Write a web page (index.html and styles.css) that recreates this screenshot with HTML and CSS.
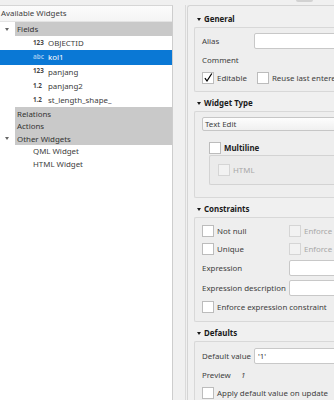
FILE: index.html
```html
<!DOCTYPE html>
<html lang="en">
<head>
  <meta charset="UTF-8" />
  <meta name="viewport" content="width=device-width, initial-scale=1.0"/>
  <title>Attributes Form</title>
  <link rel="stylesheet" href="styles.css">
</head>
<body>

<div class="topbar"><div class="tab-stub"></div></div>

<div class="main">

  <!-- Available widgets tree -->
  <div class="widgets">
    <div class="panel-head">Available Widgets</div>
    <div class="tree">
      <div class="row group"><span class="arrow"><i></i></span><span class="label">Fields</span></div>
      <div class="row leaf"><span class="type">123</span>OBJECTID</div>
      <div class="row leaf selected"><span class="type">abc</span>kol1</div>
      <div class="row leaf"><span class="type">123</span>panjang</div>
      <div class="row leaf"><span class="type">1.2</span>panjang2</div>
      <div class="row leaf"><span class="type">1.2</span>st_length_shape_</div>
      <div class="row group"><span class="arrow"></span><span class="label">Relations</span></div>
      <div class="row group"><span class="arrow"></span><span class="label">Actions</span></div>
      <div class="row group"><span class="arrow"><i></i></span><span class="label">Other Widgets</span></div>
      <div class="row plain">QML Widget</div>
      <div class="row plain">HTML Widget</div>
    </div>
  </div>

  <div class="splitter"></div>

  <!-- Widget properties -->
  <div class="props">
    <div class="frame">

      <section class="box">
        <div class="box-head"><span class="caret"></span>General</div>
        <div class="box-body form general">
          <span class="lbl">Alias</span>
          <input class="field" type="text">
          <span class="lbl wide">Comment</span>
          <div class="checks wide">
            <span class="check-item"><span class="check on"><svg viewBox="0 0 12 12"><path d="M2.3 6.2 L4.8 9.6 L10.6 0.6"/></svg></span>Editable</span>
            <span class="check-item"><span class="check"></span>Reuse last entered value</span>
          </div>
        </div>
      </section>

      <section class="box">
        <div class="box-head"><span class="caret"></span>Widget Type</div>
        <div class="box-body widget-type">
          <div class="combo">Text Edit</div>
          <div class="subgroup">
            <div class="subgroup-title"><span class="check"></span>Multiline</div>
            <div class="subgroup-body">
              <span class="check-item disabled"><span class="check"></span>HTML</span>
            </div>
          </div>
        </div>
      </section>

      <section class="box">
        <div class="box-head"><span class="caret"></span>Constraints</div>
        <div class="box-body form constraints">
          <span class="check-item"><span class="check"></span>Not null</span>
          <span class="check-item disabled"><span class="check"></span>Enforce not null constraint</span>
          <span class="check-item"><span class="check"></span>Unique</span>
          <span class="check-item disabled"><span class="check"></span>Enforce unique constraint</span>
          <span class="lbl">Expression</span>
          <input class="field" type="text">
          <span class="lbl">Expression description</span>
          <input class="field" type="text">
          <span class="check-item wide"><span class="check"></span>Enforce expression constraint</span>
        </div>
      </section>

      <section class="box">
        <div class="box-head"><span class="caret"></span>Defaults</div>
        <div class="box-body form defaults">
          <span class="lbl">Default value</span>
          <input class="field" type="text" value="'1'">
          <div class="preview wide"><span class="preview-lbl">Preview</span><em>1</em></div>
          <span class="check-item wide"><span class="check"></span>Apply default value on update</span>
        </div>
      </section>

    </div>
  </div>
</div>

</body>
</html>
```

FILE: styles.css
```css
* { box-sizing: border-box; }

body, html {
  margin: 0;
  padding: 0;
  width: 334px;
  height: 400px;
  overflow: hidden;
  font-family: "Noto Sans", "Segoe UI", sans-serif;
  font-size: 7.9px;
  color: #404040;
  background-color: #f0f0f0;
}

.topbar {
  height: 5px;
}

.tab-stub {
  margin-left: 296px;
  width: 17px;
  height: 2px;
  background: #d2d2d2;
  border-radius: 0 0 2px 2px;
}

.main {
  display: flex;
  height: 395px;
}

/* left tree */
.widgets {
  width: 173px;
  flex-shrink: 0;
  background: #fff;
  border-top: 1px solid #d6d6d6;
  border-right: 1px solid #cdcdcd;
}

.panel-head {
  height: 16px;
  line-height: 15px;
  padding-left: 1px;
  background: linear-gradient(#fcfcfc, #f4f4f4);
  border-bottom: 1px solid #e3e3e3;
  white-space: nowrap;
}

.row {
  display: flex;
  align-items: center;
  white-space: nowrap;
  height: 12.5px;
}

.tree .row:first-child { height: 14px; }

.row.leaf {
  height: 14.3px;
  padding-left: 33px;
}

.row.plain { padding-left: 33px; }

.row.selected {
  background: #0a78d5;
  color: #fff;
}

.arrow {
  width: 15px;
  height: 100%;
  display: flex;
  align-items: center;
  justify-content: center;
  padding-right: 1px;
}

.arrow i {
  width: 0;
  height: 0;
  border-left: 2.5px solid transparent;
  border-right: 2.5px solid transparent;
  border-top: 3px solid #666;
}

.group .label {
  flex: 1;
  align-self: stretch;
  display: flex;
  align-items: center;
  padding-left: 2px;
  background: #c9c9c9;
  color: #333;
}

.type {
  width: 15px;
  font-size: 6.3px;
  font-weight: bold;
  color: #444;
  position: relative;
  top: -1px;
}

.selected .type { color: #8fc1ee; }

.splitter {
  width: 12px;
  flex-shrink: 0;
}

/* right side */
.props {
  flex: 1;
  overflow: hidden;
  border-left: 1px solid #dadada;
  padding-left: 1px;
  white-space: nowrap;
}

.frame {
  width: 230px;
  height: 100%;
  padding-top: 2px;
  border-top: 1px solid #d4d4d4;
  border-left: 1px solid #d4d4d4;
  border-top-left-radius: 3px;
}

.box-head {
  height: 19px;
  padding-top: 3px;
  padding-left: 9px;
  display: flex;
  align-items: center;
  font-weight: bold;
  color: #1a1a1a;
}

.caret {
  width: 0;
  height: 0;
  margin-right: 3px;
  border-left: 2.5px solid transparent;
  border-right: 2.5px solid transparent;
  border-top: 3px solid #1a1a1a;
}

.box-body {
  margin-left: 6px;
  padding: 5px 0 6px 7px;
  background: #eeeeee;
  border: 1px solid #d8d8d8;
  border-right: none;
  border-radius: 2px 0 0 2px;
}

.form {
  display: grid;
  grid-template-columns: 52px 1fr;
  row-gap: 4px;
  align-items: center;
}

.wide { grid-column: 1 / -1; }

.field {
  height: 16px;
  width: 100%;
  margin: 0;
  padding: 0 3px;
  font: inherit;
  color: #404040;
  background: #fff;
  border: 1px solid #c8c8c8;
  border-radius: 2px;
  outline: none;
}

.general { grid-template-rows: 16px 14px 14px; }

.checks {
  display: flex;
  align-items: center;
}

.check-item {
  display: flex;
  align-items: center;
  height: 14px;
  margin-right: 10px;
}

.check {
  width: 12px;
  height: 12px;
  flex-shrink: 0;
  margin-right: 3px;
  background: #fff;
  border: 1px solid #bcbcbc;
}

.check svg {
  display: block;
  width: 10px;
  height: 10px;
  overflow: visible;
}

.check svg path {
  fill: none;
  stroke: #000;
  stroke-width: 1.5;
}

.disabled { color: #a8a8a8; }

.disabled .check {
  background: #f2f2f2;
  border-color: #d5d5d5;
}

/* widget type */
.widget-type { padding-bottom: 12px; }

.combo {
  height: 14px;
  line-height: 12px;
  padding-left: 2px;
  background: linear-gradient(#fdfdfd, #f0f0f0);
  border: 1px solid #c6c6c6;
  border-radius: 2px;
}

.subgroup {
  margin-top: 10px;
  margin-left: 7px;
}

.subgroup-title {
  height: 14px;
  display: flex;
  align-items: center;
  font-weight: bold;
  color: #222;
}

.subgroup-body {
  height: 30px;
  padding: 8px 0 0 8px;
  background: #ebebeb;
  border: 1px solid #d3d3d3;
  border-right: none;
  border-radius: 2px 0 0 2px;
}

.subgroup-body .check-item { height: 12px; }

/* constraints */
.constraints {
  grid-template-columns: 87px 1fr;
  grid-template-rows: 14px 14px 16px 16px 14px;
  padding-top: 6px;
  padding-bottom: 7px;
}

/* defaults */
.defaults {
  grid-template-rows: 16px 14px 14px;
  padding-top: 6px;
}

.preview {
  display: flex;
  align-items: center;
}

.preview-lbl { width: 39px; }

.preview em { color: #444; }
```
